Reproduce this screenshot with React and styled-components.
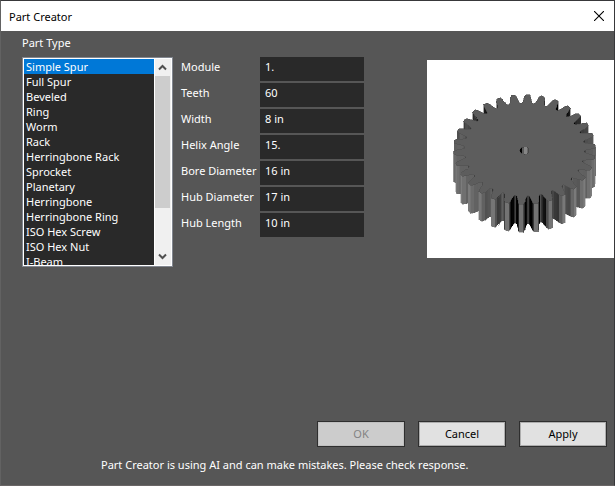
import React, { useState } from "react";
import styled, { createGlobalStyle } from "styled-components";

const GlobalStyle = createGlobalStyle`
  * { box-sizing: border-box; }
  body { margin: 0; background: #565656; }
  body, input, button { font-family: "Noto Sans", "Open Sans", sans-serif; font-size: 11px; }
`;

const Dialog = styled.div`
  display: flex;
  flex-direction: column;
  min-height: 100vh;
  background: #565656;
  color: #fff;
  border: 1px solid #38383a;
  border-left-color: #626262;
  border-bottom-color: #6a6666;
`;

const TitleBar = styled.header`
  display: flex;
  align-items: center;
  justify-content: space-between;
  height: 30px;
  padding: 0 8px;
  background: #fff;
  color: #000;
`;

const Title = styled.h1`
  margin: 0;
  font-size: 11px;
  font-weight: 400;
`;

const CloseButton = styled.button`
  display: flex;
  align-items: center;
  justify-content: center;
  width: 14px;
  height: 28px;
  padding: 0;
  border: 0;
  background: transparent;
`;

const Content = styled.main`
  flex: 1;
  display: flex;
  align-items: flex-start;
  padding: 4px 0 0 21px;
`;

const TypeColumn = styled.section`
  width: 151px;
  margin-right: 8px;
`;

const GroupLabel = styled.div`
  height: 22px;
  line-height: 16px;
`;

const ListFrame = styled.div`
  display: flex;
  height: 210px;
  border: 1px solid #828790;
  padding: 1px;
  background: #fff;
`;

const List = styled.ul`
  flex: 1;
  margin: 0 1px 0 0;
  padding: 0;
  list-style: none;
  overflow: hidden;
  background: #292929;
`;

const ListItem = styled.li`
  height: 15px;
  padding-left: 2px;
  line-height: 15px;
  white-space: nowrap;
  cursor: default;
  background: ${(p) => (p.$selected ? "#0078d7" : "transparent")};
`;

const ScrollTrack = styled.div`
  display: flex;
  flex-direction: column;
  width: 16px;
  padding-right: 1px;
  background: #f0f0f0;
`;

const ScrollArrow = styled.button`
  display: flex;
  align-items: center;
  justify-content: center;
  height: 17px;
  padding: 0;
  border: 0;
  background: #f0f0f0;
`;

const ScrollThumb = styled.div`
  height: 132px;
  margin-bottom: auto;
  background: #cdcdcd;
`;

const Fields = styled.form`
  display: grid;
  grid-template-columns: 79px 104px;
  row-gap: 2px;
  margin-top: 22px;
`;

const FieldLabel = styled.label`
  line-height: 20px;
  white-space: nowrap;
`;

const FieldInput = styled.input`
  width: 100%;
  height: 24px;
  padding: 0 5px 6px;
  border: 0;
  border-radius: 0;
  outline: 0;
  background: #292929;
  color: #fff;
`;

const Preview = styled.figure`
  width: 187px;
  height: 198px;
  margin: 25px 0 0 auto;
  background: #fff;
`;

const Actions = styled.div`
  display: flex;
  justify-content: flex-end;
  gap: 13px;
  padding-right: 7px;
`;

const ActionButton = styled.button`
  width: 88px;
  height: 26px;
  padding: 0 0 2px;
  border: 1px solid #2e2e2e;
  border-radius: 0;
  box-shadow: inset 0 0 0 1px #adadad;
  background: #e1e1e1;
  color: #000;

  &:disabled {
    box-shadow: inset 0 0 0 1px #bfbfbf;
    background: #cccccc;
    color: #838383;
  }
`;

const Notice = styled.p`
  margin: 10px 0 12px;
  padding-left: 100px;
  line-height: 16px;
`;

const partTypes = [
  "Simple Spur", "Full Spur", "Beveled", "Ring", "Worm", "Rack",
  "Herringbone Rack", "Sprocket", "Planetary", "Herringbone",
  "Herringbone Ring", "ISO Hex Screw", "ISO Hex Nut", "I-Beam",
];

const fields = [
  ["Module", "1."],
  ["Teeth", "60"],
  ["Width", "8 in"],
  ["Helix Angle", "15."],
  ["Bore Diameter", "16 in"],
  ["Hub Diameter", "17 in"],
  ["Hub Length", "10 in"],
];

const gear = { cx: 97.5, cy: 89.5, rx: 71, ry: 55, depth: 28, teeth: 30, phase: 0.045 };

const toothProfile = [
  [-0.45, 0.84], [-0.36, 0.862], [-0.28, 0.91], [-0.22, 0.96], [-0.13, 1],
  [0.13, 1], [0.22, 0.96], [0.28, 0.91], [0.36, 0.862], [0.45, 0.84],
];

function wallLevel(segment, facing, u) {
  if (segment === 4) return 112 + Math.round(14 * Math.abs(u));
  if (segment === 3 || segment === 5) {
    return Math.round(Math.max(30, 120 * facing - 8));
  }
  const lift = u < -0.3 ? 34 : u > 0.45 ? 14 : 0;
  return Math.round(Math.max(0, Math.min(98, 150 * (facing - 0.44) + lift)));
}

function buildGear() {
  const pitch = (Math.PI * 2) / gear.teeth;
  const points = [];
  for (let i = 0; i < gear.teeth; i++) {
    for (const [t, r] of toothProfile) {
      const a = gear.phase + (i + t) * pitch;
      points.push({ u: Math.sin(a) * r, v: -Math.cos(a) * r });
    }
  }
  const px = (p) => (gear.cx + p.u * gear.rx).toFixed(1);
  const py = (p, d = 0) => (gear.cy + p.v * gear.ry + d).toFixed(1);
  const walls = [];
  points.forEach((p, i) => {
    const q = points[(i + 1) % points.length];
    const du = q.u - p.u;
    const dv = q.v - p.v;
    const facing = -du / Math.hypot(du, dv);
    if (facing <= 0) return;
    const level = wallLevel(i % toothProfile.length, facing, p.u);
    walls.push({
      key: i,
      order: p.v + q.v,
      fill: `rgb(${level},${level},${level})`,
      points: `${px(p)},${py(p)} ${px(q)},${py(q)} ${px(q)},${py(q, gear.depth)} ${px(p)},${py(p, gear.depth)}`,
    });
  });
  walls.sort((a, b) => a.order - b.order);
  return { walls, face: points.map((p) => `${px(p)},${py(p)}`).join(" ") };
}

const gearShape = buildGear();

function GearDrawing() {
  return (
    <svg width="187" height="198" viewBox="0 0 187 198" shapeRendering="crispEdges" role="img" aria-label="Spur gear preview">
      {gearShape.walls.map((w) => (
        <polygon key={w.key} points={w.points} fill={w.fill} stroke={w.fill} strokeWidth="0.4" />
      ))}
      <polygon points={gearShape.face} fill="#5d5d5d" stroke="#505050" strokeWidth="0.6" />
      <ellipse cx="97.5" cy="90.5" rx="5" ry="4" fill="#484848" />
      <path d="M93 89h1v-1h1v5h-1v-1h-1z" fill="#000" />
      <path d="M95 88h2v6h-2z" fill="#5a5a5a" />
      <path d="M97 87h3v7h-3z" fill="#858585" />
      <path d="M100 88h1v5h-1z" fill="#686868" />
    </svg>
  );
}

function Chevron({ up }) {
  return (
    <svg width="9" height="7" viewBox="0 0 9 7" aria-hidden="true">
      <path d={up ? "M1 5.5 4.5 2 8 5.5" : "M1 1.5 4.5 5 8 1.5"} fill="none" stroke="#505050" strokeWidth="2" />
    </svg>
  );
}

export default function App() {
  const [selected, setSelected] = useState("Simple Spur");
  return (
    <>
      <GlobalStyle />
      <Dialog role="dialog" aria-labelledby="dialog-title">
        <TitleBar>
          <Title id="dialog-title">Part Creator</Title>
          <CloseButton aria-label="Close">
            <svg width="10" height="10" viewBox="0 0 10 10" aria-hidden="true">
              <path d="M0 0 10 10M10 0 0 10" stroke="#000" strokeWidth="1.1" />
            </svg>
          </CloseButton>
        </TitleBar>
        <Content>
          <TypeColumn>
            <GroupLabel id="part-type">Part Type</GroupLabel>
            <ListFrame>
              <List role="listbox" aria-labelledby="part-type">
                {partTypes.map((name) => (
                  <ListItem
                    key={name}
                    role="option"
                    aria-selected={name === selected}
                    $selected={name === selected}
                    onClick={() => setSelected(name)}
                  >
                    {name}
                  </ListItem>
                ))}
              </List>
              <ScrollTrack>
                <ScrollArrow aria-label="Scroll up"><Chevron up /></ScrollArrow>
                <ScrollThumb />
                <ScrollArrow aria-label="Scroll down"><Chevron /></ScrollArrow>
              </ScrollTrack>
            </ListFrame>
          </TypeColumn>
          <Fields>
            {fields.map(([label, value]) => {
              const id = label.toLowerCase().replace(" ", "-");
              return (
                <React.Fragment key={id}>
                  <FieldLabel htmlFor={id}>{label}</FieldLabel>
                  <FieldInput id={id} defaultValue={value} />
                </React.Fragment>
              );
            })}
          </Fields>
          <Preview><GearDrawing /></Preview>
        </Content>
        <Actions>
          <ActionButton disabled>OK</ActionButton>
          <ActionButton>Cancel</ActionButton>
          <ActionButton>Apply</ActionButton>
        </Actions>
        <Notice>Part Creator is using AI and can make mistakes. Please check response.</Notice>
      </Dialog>
    </>
  );
}
